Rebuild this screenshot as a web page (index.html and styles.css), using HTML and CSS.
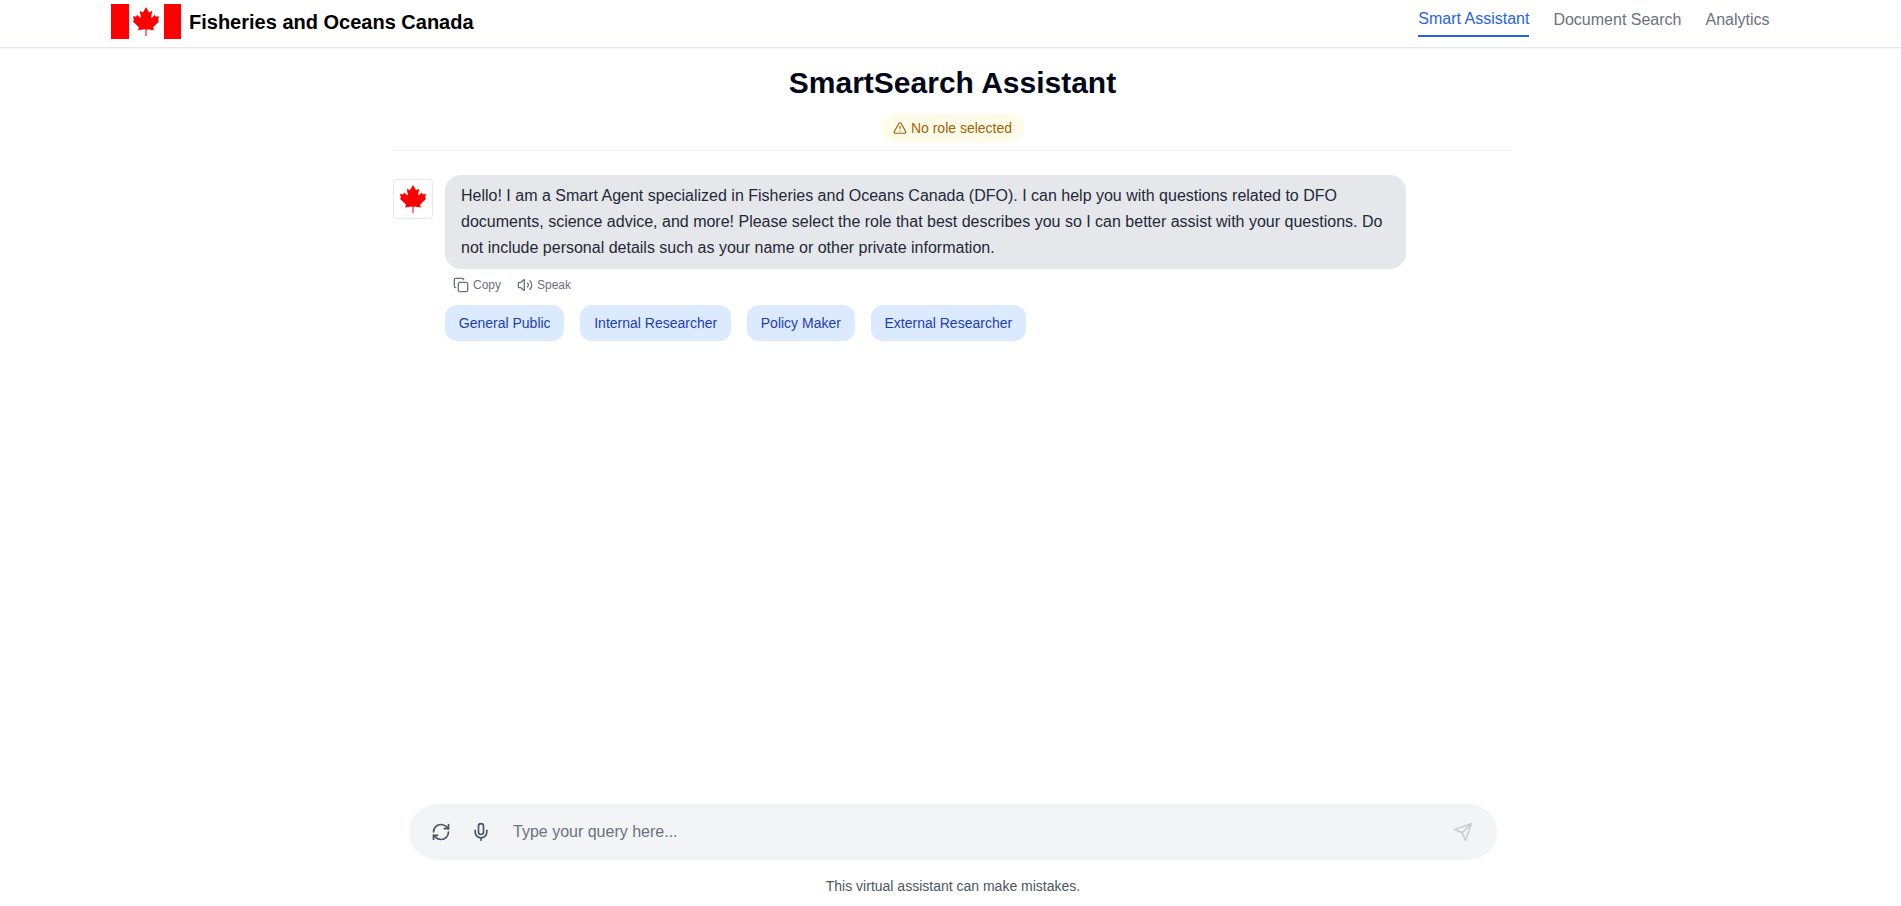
FILE: index.html
```html
<!DOCTYPE html>
<html lang="en">
<head>
<meta charset="utf-8">
<title>SmartSearch Assistant</title>
<link rel="stylesheet" href="styles.css">
</head>
<body>
<svg width="0" height="0" class="defs" aria-hidden="true">
  <symbol id="leaf" viewBox="0 0 100 106" preserveAspectRatio="none">
    <path d="M50 0 L60 17 Q62 20 66 18 L74 14 L70 36 Q70 41 74 38 L84 28 L87 34 Q88 36 91 35 L100 34 L97 45 Q96 48 98 50 L100 53 L79 72 Q77 74 78 77 L80 85 L55 81 Q52 81 52 84 L52 106 L48 106 L48 84 Q48 81 45 81 L20 85 L22 77 Q23 74 21 72 L0 53 L2 50 Q4 48 3 45 L0 34 L9 35 Q12 36 13 34 L16 28 L26 38 Q30 41 30 36 L26 14 L34 18 Q38 20 40 17 Z"/>
  </symbol>
</svg>
<header class="header">
  <div class="brand">
    <div class="flag"><svg class="flag-leaf"><use href="#leaf"/></svg></div>
    <span class="brand-name">Fisheries and Oceans Canada</span>
  </div>
  <nav class="nav">
    <a class="nav-link active">Smart Assistant</a>
    <a class="nav-link">Document Search</a>
    <a class="nav-link">Analytics</a>
  </nav>
</header>
<main class="main">
  <section class="intro">
    <h1 class="title">SmartSearch Assistant</h1>
    <div class="role">
      <svg class="icon role-icon" viewBox="0 0 24 24"><path d="m21.730 18-8-14a2 2 0 0 0-3.480 0l-8 14A2 2 0 0 0 4 21h16a2 2 0 0 0 1.730-3Z"/><path d="M12 9v4M12 17h.01"/></svg>
      <span>No role selected</span>
    </div>
  </section>
  <section class="chat">
    <div class="avatar"><svg class="avatar-leaf"><use href="#leaf"/></svg></div>
    <div class="message">
      <p class="bubble">Hello! I am a Smart Agent specialized in Fisheries and Oceans Canada (DFO). I can help you with questions related to DFO documents, science advice, and more! Please select the role that best describes you so I can better assist with your questions. Do not include personal details such as your name or other private information.</p>
      <div class="actions">
        <button class="action"><svg class="icon action-icon" viewBox="0 0 24 24"><rect x="8" y="8" width="14" height="14" rx="2"/><path d="M4 16c-1.100 0-2-.9-2-2V4c0-1.100.9-2 2-2h10c1.100 0 2 .9 2 2"/></svg>Copy</button>
        <button class="action"><svg class="icon action-icon" viewBox="0 0 24 24"><path d="M11 4.700a.7.7 0 0 0-1.200-.5L6.400 7.600A1.400 1.400 0 0 1 5.400 8H3a1 1 0 0 0-1 1v6a1 1 0 0 0 1 1h2.400a1.400 1.400 0 0 1 1 .4l3.400 3.400a.7.7 0 0 0 1.200-.5Z"/><path d="M16 9a5 5 0 0 1 0 6M19.400 18.400a9 9 0 0 0 0-12.800"/></svg>Speak</button>
      </div>
      <div class="roles">
        <button class="role-button">General Public</button>
        <button class="role-button">Internal Researcher</button>
        <button class="role-button">Policy Maker</button>
        <button class="role-button">External Researcher</button>
      </div>
    </div>
  </section>
  <footer class="composer">
    <div class="input-bar">
      <svg class="icon bar-icon" viewBox="0 0 24 24"><path d="M3 12a9 9 0 0 1 9-9 9.750 9.750 0 0 1 6.740 2.740L21 8"/><path d="M21 3v5h-5"/><path d="M21 12a9 9 0 0 1-9 9 9.750 9.750 0 0 1-6.740-2.740L3 16"/><path d="M8 16H3v5"/></svg>
      <svg class="icon bar-icon" viewBox="0 0 24 24"><path d="M12 2a3 3 0 0 0-3 3v7a3 3 0 0 0 6 0V5a3 3 0 0 0-3-3Z"/><path d="M19 10v2a7 7 0 0 1-14 0v-2M12 19v3"/></svg>
      <input class="query" type="text" placeholder="Type your query here...">
      <svg class="icon send-icon" viewBox="0 0 24 24"><path d="m22 2-7 20-4-9-9-4ZM22 2 11 13"/></svg>
    </div>
    <p class="notice">This virtual assistant can make mistakes.</p>
  </footer>
</main>
</body>
</html>
```
FILE: styles.css
```css
* { box-sizing: border-box; }
body {
  margin: 0;
  height: 100vh;
  display: flex;
  flex-direction: column;
  overflow: hidden;
  background: #fff;
  color: #020817;
  font-family: "Liberation Sans", Arial, sans-serif;
  font-size: 16px;
  line-height: 24px;
}
button, input { font: inherit; border: 0; background: none; padding: 0; }
.defs { display: block; flex: none; }
.icon {
  flex: none;
  fill: none;
  stroke: currentColor;
  stroke-width: 2;
  stroke-linecap: round;
  stroke-linejoin: round;
}
.header {
  flex: none;
  height: 48px;
  padding: 4px 131.500px 0 111px;
  display: flex;
  justify-content: space-between;
  align-items: flex-start;
  border-bottom: 1px solid #e2e8f0;
  box-shadow: 0 1px 2px rgba(0, 0, 0, .05);
}
.brand { display: flex; align-items: center; gap: 8px; }
.flag {
  width: 70px;
  height: 35px;
  display: flex;
  align-items: center;
  justify-content: center;
  background: linear-gradient(90deg, #f00 17.500px, #fff 17.500px 52.500px, #f00 52.500px);
}
.flag-leaf { width: 26px; height: 29px; fill: #f00; }
.brand-name { font-size: 20px; line-height: 28px; font-weight: 700; color: #000; }
.nav { display: flex; gap: 24px; align-items: flex-start; padding-top: 3px; }
.nav-link { color: #6b7280; padding-top: 1px; }
.nav-link.active {
  color: #2563eb;
  padding: 0 0 4px;
  border-bottom: 2px solid #2563eb;
}
.main {
  flex: 1;
  width: 1121px;
  margin-left: 392px;
  display: flex;
  flex-direction: column;
}
.intro {
  height: 103px;
  padding-top: 17px;
  display: flex;
  flex-direction: column;
  align-items: center;
  border-bottom: 1px solid #f3f4f6;
}
.title { margin: 0 0 13px; font-size: 30px; line-height: 36px; font-weight: 700; }
.role {
  height: 28px;
  padding: 0 12px;
  border-radius: 14px;
  display: flex;
  align-items: center;
  gap: 4px;
  background: #fefce8;
  color: #a16207;
  font-size: 14px;
}
.role-icon { width: 14px; height: 14px; }
.chat { flex: 1; display: flex; align-items: flex-start; padding: 24px 0 0 1px; gap: 12px; }
.avatar {
  width: 40px;
  height: 40px;
  margin-top: 4px;
  border: 1px solid #e2e8f0;
  border-radius: 4px;
  display: flex;
  align-items: center;
  justify-content: center;
}
.avatar-leaf { width: 26px; height: 28px; fill: #f00; }
.message { width: 961px; }
.bubble {
  margin: 0;
  padding: 8px 16px;
  border-radius: 16px;
  background: #e5e7eb;
  color: #1f2937;
  line-height: 26px;
}
.actions { display: flex; gap: 16px; padding: 8px 8px 0; height: 24px; }
.action {
  height: 16px;
  display: flex;
  align-items: center;
  gap: 4px;
  color: #6b7280;
  font-size: 12px;
  line-height: 16px;
}
.action-icon { width: 16px; height: 16px; }
.roles { display: flex; gap: 16px; margin-top: 12px; }
.role-button {
  height: 36px;
  padding: 0 13.800px;
  border-radius: 12px;
  background: #dbeafe;
  color: #1e40af;
  font-size: 14px;
  line-height: 20px;
}
.composer { padding: 0 16px 10px 17px; }
.input-bar {
  height: 56px;
  padding: 0 24px 0 22px;
  border-radius: 28px;
  background: #f3f4f6;
  display: flex;
  align-items: center;
  gap: 20px;
}
.bar-icon { width: 20px; height: 20px; color: #4b5563; }
.query { flex: 1; padding-left: 2px; color: #1f2937; outline: none; }
.query::placeholder { color: #6b7280; opacity: 1; }
.send-icon { width: 20px; height: 20px; color: #c9cdd5; }
.notice { margin: 16px 0 0; text-align: center; color: #4b5563; font-size: 14px; line-height: 20px; }
```
